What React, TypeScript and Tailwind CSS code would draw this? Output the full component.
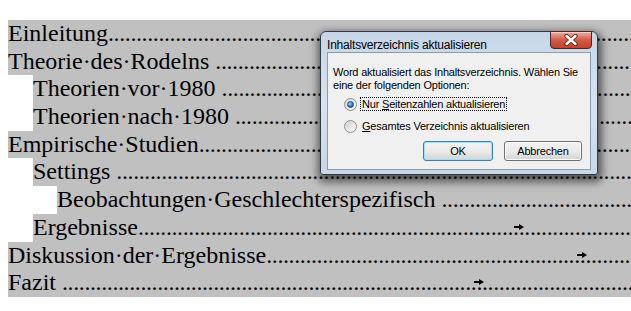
import React from "react";

interface TocRow {
  label: string;
  indent: 0 | 1 | 2;
  arrow?: number; // x of the tab mark, relative to page
}

const ROWS: TocRow[] = [
  { label: "Einleitung", indent: 0 },
  { label: "Theorie·des·Rodelns ", indent: 0 },
  { label: "Theorien·vor·1980 ", indent: 1 },
  { label: "Theorien·nach·1980 ", indent: 1 },
  { label: "Empirische·Studien", indent: 0 },
  { label: "Settings ", indent: 1 },
  { label: "Beobachtungen·Geschlechterspezifisch ", indent: 2 },
  { label: "Ergebnisse", indent: 1, arrow: 514 },
  { label: "Diskussion·der·Ergebnisse", indent: 0, arrow: 577 },
  { label: "Fazit ", indent: 0, arrow: 474 },
];

const DOTS = ".".repeat(160);

function TabArrow({ left }: { left: number }) {
  return (
    <svg
      className="absolute top-[10px]"
      style={{ left }}
      width="10"
      height="6"
      viewBox="0 0 10 6"
    >
      <rect x="0" y="2" width="6" height="2" fill="#000" />
      <polygon points="5,0 10,3 5,6" fill="#000" />
    </svg>
  );
}

function Row({ row }: { row: TocRow }) {
  const indentW = row.indent === 2 ? "w-[49px]" : row.indent === 1 ? "w-[25px]" : "w-0";
  const grayLeft = 8 + (row.indent === 2 ? 49 : row.indent === 1 ? 25 : 0);
  return (
    <div className="flex h-[27.7px] pl-[8px] bg-white">
      <div className={`${indentW} shrink-0 bg-white`} />
      <div className="relative flex flex-1 min-w-0 bg-[#c0c0c0] leading-[27.7px]">
        <span className="whitespace-pre shrink-0">{row.label}</span>
        <span className="flex-1 overflow-hidden whitespace-nowrap tracking-[-0.4px]">{DOTS}</span>
        {row.arrow !== undefined && <TabArrow left={row.arrow - grayLeft} />}
      </div>
    </div>
  );
}

function Radio({ checked }: { checked: boolean }) {
  return (
    <div className="w-[13px] h-[13px] rounded-full border border-[#8e8f8f] bg-gradient-to-br from-[#d9d9d9] to-[#f8f8f8] flex items-center justify-center shrink-0">
      {checked && (
        <div className="w-[7px] h-[7px] rounded-full bg-[radial-gradient(circle_at_35%_35%,#9fe3ff,#1c83c6_55%,#0c3f73)] border border-[#1f4f7a]" />
      )}
      {!checked && <div className="w-[9px] h-[9px] rounded-full bg-gradient-to-br from-[#cfcfcf] to-[#fbfbfb]" />}
    </div>
  );
}

function Dialog() {
  return (
    <div
      className="absolute left-[320px] top-[31px] w-[278px] h-[144px] rounded-t-[6px] rounded-b-[3px] border border-[#2e3a46] bg-gradient-to-b from-[#c6d6e7] via-[#d8e3ee] to-[#c9d7e6] shadow-[1px_4px_9px_3px_rgba(0,0,0,0.55)] flex flex-col"
      style={{ fontFamily: '"Liberation Sans", Arial, sans-serif' }}
    >
      <div className="relative h-[20px] shrink-0 flex items-center pl-[6px]">
        <span className="text-[12px] text-black leading-none pt-[6px] tracking-[-0.2px] whitespace-nowrap">
          Inhaltsverzeichnis aktualisieren
        </span>
        <div className="absolute right-[5px] -top-[1px] w-[42px] h-[18px] rounded-b-[4px] border border-[#5c2219] bg-gradient-to-b from-[#e9aea2] via-[#d25a48] to-[#c0412c] flex items-center justify-center shadow-[inset_0_1px_0_rgba(255,255,255,0.5)]">
          <svg width="14" height="12" viewBox="0 0 14 12">
            <path d="M2.5 2 L11.5 10 M11.5 2 L2.5 10" stroke="#5a2018" strokeWidth="4.2" strokeLinecap="round" />
            <path d="M2.5 2 L11.5 10 M11.5 2 L2.5 10" stroke="#fff" strokeWidth="2.4" strokeLinecap="round" />
          </svg>
        </div>
      </div>
      <div className="flex-1 mx-[6px] mb-[4px] border border-[#8c9bab] bg-[#f0f0f0] flex flex-col text-[11px] text-black tracking-[-0.2px]">
        <div className="pt-[13px] pl-[5px] leading-[13px] whitespace-nowrap">
          <div>Word aktualisiert das Inhaltsverzeichnis. Wählen Sie</div>
          <div>eine der folgenden Optionen:</div>
        </div>
        <div className="mt-[1px] pl-[16px] flex flex-col">
          <div className="h-[22px] flex items-center gap-[3px]">
            <Radio checked />
            <span className="border border-dotted border-black px-[1px] leading-[12px] whitespace-nowrap">
              Nur <u>S</u>eitenzahlen aktualisieren
            </span>
          </div>
          <div className="h-[22px] flex items-center gap-[3px]">
            <Radio checked={false} />
            <span className="px-[2px] leading-[12px] whitespace-nowrap">
              <u>G</u>esamtes Verzeichnis aktualisieren
            </span>
          </div>
        </div>
        <div className="mt-[4px] flex justify-end gap-[11px] pr-[8px]">
          <div className="w-[70px] h-[20px] rounded-[3px] border border-[#3c7fb1] bg-gradient-to-b from-[#f2f2f2] via-[#ebebeb] to-[#d4d4d4] shadow-[inset_0_0_0_1px_#9fe0fb] flex items-center justify-center">
            OK
          </div>
          <div className="w-[78px] h-[20px] rounded-[3px] border border-[#707070] bg-gradient-to-b from-[#f2f2f2] via-[#ebebeb] to-[#d4d4d4] shadow-[inset_0_0_0_1px_#fcfcfc] flex items-center justify-center">
            Abbrechen
          </div>
        </div>
      </div>
    </div>
  );
}

export default function App() {
  return (
    <div className="relative w-[631px] h-[311px] overflow-hidden bg-white">
      <div
        className="pt-[20px] text-[24px] text-black"
        style={{ fontFamily: '"Liberation Serif", "Times New Roman", serif' }}
      >
        {ROWS.map((r, i) => (
          <Row key={i} row={r} />
        ))}
      </div>
      <Dialog />
    </div>
  );
}
